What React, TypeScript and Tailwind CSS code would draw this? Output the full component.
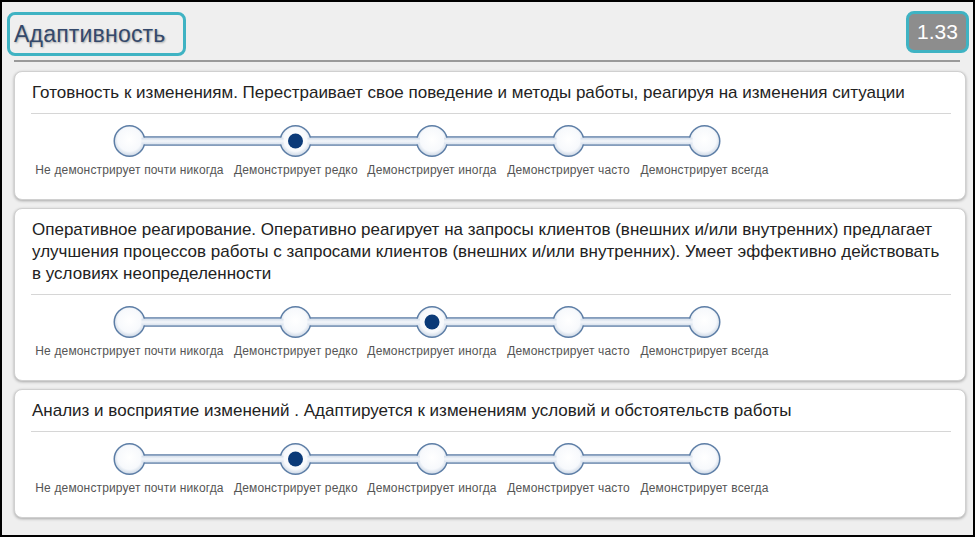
import React from "react";

const LABELS = [
  { t: "Не демонстрирует почти никогда", w: 189 },
  { t: "Демонстрирует редко", w: 123 },
  { t: "Демонстрирует иногда", w: 130 },
  { t: "Демонстрирует часто", w: 123 },
  { t: "Демонстрирует всегда", w: 129 },
];
const GAP = 10;

function centers() {
  const cs: number[] = [];
  let x = 0;
  for (const l of LABELS) {
    cs.push(x + l.w / 2);
    x += l.w + GAP;
  }
  return cs;
}

function Slider({ value, id }: { value: number; id: string }) {
  const cs = centers();
  const r = 16;
  const cy = 18;
  const stroke = "#5d7ea6";
  return (
    <div className="ml-[4px]">
      <svg width={740} height={36} className="block">
        <defs>
          <radialGradient id={`g${id}`} cx="50%" cy="45%" r="55%">
            <stop offset="0%" stopColor="#ffffff" />
            <stop offset="70%" stopColor="#f7f9fc" />
            <stop offset="100%" stopColor="#c9d5e4" />
          </radialGradient>
          <linearGradient id={`t${id}`} x1="0" y1="0" x2="0" y2="1">
            <stop offset="0%" stopColor="#d3ddea" />
            <stop offset="50%" stopColor="#f3f6fa" />
            <stop offset="100%" stopColor="#d9e2ee" />
          </linearGradient>
        </defs>
        <rect
          x={cs[0]}
          y={cy - 4}
          width={cs[4] - cs[0]}
          height={8}
          fill={`url(#t${id})`}
          stroke={stroke}
          strokeWidth={1.5}
        />
        {cs.map((c, i) => (
          <circle key={i} cx={c} cy={cy} r={r - 0.75} fill={`url(#g${id})`} stroke={stroke} strokeWidth={1.5} />
        ))}
        {cs.slice(0, 4).map((c, i) => (
          <rect
            key={i}
            x={c + r - 4}
            y={cy - 3.25}
            width={cs[i + 1] - c - 2 * r + 8}
            height={6.5}
            fill={`url(#t${id})`}
          />
        ))}
        <circle cx={cs[value]} cy={cy} r={7.5} fill="#0b3a78" />
      </svg>
      <div className="flex gap-[10px] mt-[4px]">
        {LABELS.map((l, i) => (
          <div
            key={i}
            style={{ width: l.w }}
            className="text-center text-[12px] leading-[15px] tracking-[0.15px] text-[#555] whitespace-nowrap"
          >
            {l.t}
          </div>
        ))}
      </div>
    </div>
  );
}

function Card({ title, value, id }: { title: string; value: number; id: string }) {
  return (
    <div className="bg-white rounded-[8px] border border-[#d0d0d0] shadow-[0_1px_3px_rgba(0,0,0,0.3)] pt-[10px] pb-[21px] pl-[16px] pr-[14px]">
      <div className="pl-[1px] text-[17px] leading-[22px] text-[#222]">{title}</div>
      <div className="mt-[9px] h-px bg-[#d6d6d6]" />
      <div className="mt-[9px]">
        <Slider value={value} id={id} />
      </div>
    </div>
  );
}

export default function App() {
  return (
    <div
      className="w-[975px] h-[537px] border-2 border-black bg-[#efefef] overflow-hidden flex flex-col"
      style={{ fontFamily: '"Liberation Sans", Arial, sans-serif' }}
    >
      <div className="flex justify-between items-start pt-[10px] pl-[5px] pr-[4px]">
        <div className="h-[44px] w-[179px] border-[3px] border-[#3fb3c3] rounded-[8px] flex items-center pl-[4px] text-[23px] tracking-[0.2px] text-[#34496b] [text-shadow:1px_1px_2px_rgba(0,0,0,0.3)]">
          Адаптивность
        </div>
        <div className="-mt-[1px] h-[42px] w-[63px] border-[3px] border-[#3fb3c3] rounded-[8px] bg-[#8d8d8d] flex items-center justify-center text-[21px] text-white">
          1.33
        </div>
      </div>
      <div className="mt-[4px] ml-[12px] w-[946px] h-[2px] bg-[#9a9a9a]" />
      <div className="mt-[9px] pl-[12px] pr-[7px] flex flex-col gap-[8px]">
        <Card
          id="a"
          value={1}
          title="Готовность к изменениям. Перестраивает свое поведение и методы работы, реагируя на изменения ситуации"
        />
        <Card
          id="b"
          value={2}
          title="Оперативное реагирование. Оперативно реагирует на запросы клиентов (внешних и/или внутренних) предлагает улучшения процессов работы с запросами клиентов (внешних и/или внутренних). Умеет эффективно действовать в условиях неопределенности"
        />
        <Card
          id="c"
          value={1}
          title="Анализ и восприятие изменений . Адаптируется к изменениям условий и обстоятельств работы"
        />
      </div>
    </div>
  );
}
